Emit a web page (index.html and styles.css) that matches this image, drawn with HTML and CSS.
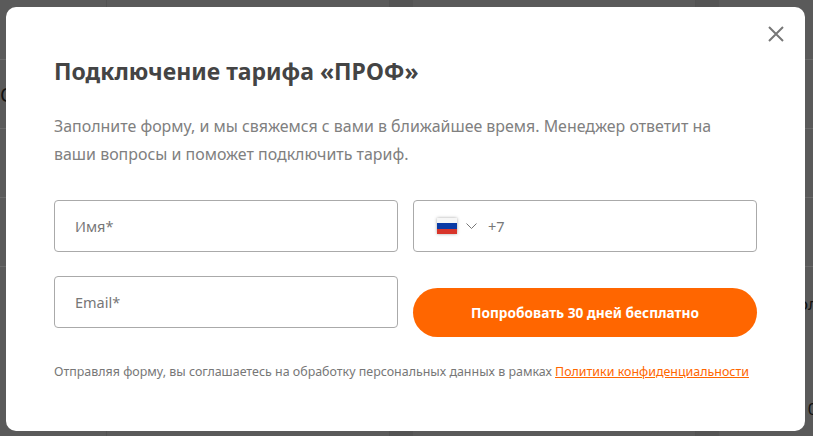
FILE: index.html
```html
<!DOCTYPE html>
<html><head>
  <meta charset="utf-8">
  <title>Подключение тарифа</title>
<link rel="stylesheet" href="styles.css">
</head>
<body>
<div class="page">
 <div class="columns">
  <div class="col col1"></div>
  <div class="col col2"></div>
  <div class="col gap"></div>
  <div class="col col2"></div>
  <div class="col gap"></div>
  <div class="col col3"></div>
 </div>
 <div class="table">
  <div class="row row1"></div>
  <div class="row row2"><span>О</span></div>
  <div class="row row3"></div>
  <div class="row row4"></div>
  <div class="row row5"><span class="righttext">ол</span></div>
  <div class="row row6"><span class="righttext">10</span></div>
 </div>
</div>
<div class="backdrop">
 <div class="modal">
  <button class="close" aria-label="Закрыть">
   <svg width="16" height="16" viewBox="0 0 16 16"><path d="M1 1L15 15M15 1L1 15" stroke="#777" stroke-width="2" fill="none"/></svg>
  </button>
  <h1>Подключение тарифа «ПРОФ»</h1>
  <p class="lead">Заполните форму, и мы свяжемся с вами в ближайшее время. Менеджер ответит на ваши вопросы и поможет подключить тариф.</p>
  <form class="fields">
   <div class="field">Имя*</div>
   <div class="field phone">
    <span class="flag"></span>
    <svg class="chevron" width="11" height="6" viewBox="0 0 11 6"><path d="M.5.5L5.5 5.5 10.5.5" stroke="#777" fill="none"/></svg>
    <span>+7</span>
   </div>
   <div class="field">Email*</div>
   <button type="button" class="submit">Попробовать 30 дней бесплатно</button>
  </form>
  <p class="note">Отправляя форму, вы соглашаетесь на обработку персональных данных в рамках <a href="#">Политики конфиденциальности</a></p>
 </div>
</div>
</body></html>
```

FILE: styles.css
```css
html, body{
  margin: 0;
  height: 100%;
  overflow: hidden;
}
body{
  font-family: "Noto Sans", sans-serif;
  background-color: #5a5a5a;
}
div.page{
  position: relative;
  height: 436px;
  overflow: hidden;
}
div.columns{
  position: absolute;
  top: 0;
  left: 0;
  width: 100%;
  height: 100%;
  display: flex;
}
div.col{
  box-sizing: border-box;
  border-right: solid 1px #525252;
}
div.col1{
  width: 107px;
}
div.col2{
  width: 283px;
}
div.gap{
  width: 23px;
  background-color: #545454;
  border-right: none;
}
div.col3{
  flex: 1;
  border-right: none;
}
div.table{
  position: relative;
  display: flex;
  flex-direction: column;
}
div.row{
  box-sizing: border-box;
  border-bottom: solid 1px #6a6a6a;
  flex: none;
  height: 69px;
  color: #111;
  font-size: 20px;
  display: flex;
  align-items: center;
}
div.row1{
  height: 60px;
}
div.row5{
  height: 72px;
  border-bottom: none;
  font-size: 17px;
}
div.row6{
  height: 138px;
  border-bottom: none;
  font-size: 17px;
}
span.righttext{
  margin-left: 798px;
  white-space: nowrap;
}
div.backdrop{
  position: fixed;
  top: 0;
  left: 0;
  width: 100%;
  height: 100%;
}
div.modal{
  position: absolute;
  left: 6px;
  top: 7px;
  width: 799px;
  height: 424px;
  box-sizing: border-box;
  padding: 48px 48px 0;
  background-color: #fff;
  border-radius: 10px;
}
button.close{
  position: absolute;
  top: 19px;
  right: 21px;
  width: 16px;
  height: 16px;
  padding: 0;
  border: none;
  background: none;
  display: block;
}
button.close svg{
  display: block;
}
h1{
  margin: 0;
  font-size: 23px;
  line-height: 32px;
  font-weight: 700;
  color: #444;
}
p.lead{
  margin: 25px 0 0;
  width: 690px;
  font-size: 15.95px;
  line-height: 28px;
  color: #808080;
}
form.fields{
  margin-top: 32px;
  display: grid;
  grid-template-columns: 344px 344px;
  column-gap: 15px;
  row-gap: 24px;
}
div.field{
  height: 52px;
  box-sizing: border-box;
  border: solid 1px #aaa;
  border-radius: 4px;
  padding: 0 20px;
  display: flex;
  align-items: center;
  font-size: 14.5px;
  color: #777;
}
div.phone{
  padding-left: 23px;
}
span.flag{
  width: 20px;
  height: 16px;
  margin-right: 9px;
  background: linear-gradient(#f6f6f6 33%, #0a3aa5 33%, #0a3aa5 66%, #d8352a 66%);
  box-shadow: 0 0 3px rgba(0,0,0,.35);
}
svg.chevron{
  margin-right: 11px;
}
button.submit{
  height: 49px;
  margin-top: 12px;
  align-self: start;
  border: none;
  border-radius: 25px;
  background-color: #ff6600;
  color: #fff;
  font-family: inherit;
  font-size: 13.7px;
  font-weight: 700;
}
p.note{
  margin: 26px 0 0;
  font-size: 12.45px;
  line-height: 18px;
  color: #777;
  white-space: nowrap;
}
p.note a{
  color: #ff6600;
}
```
